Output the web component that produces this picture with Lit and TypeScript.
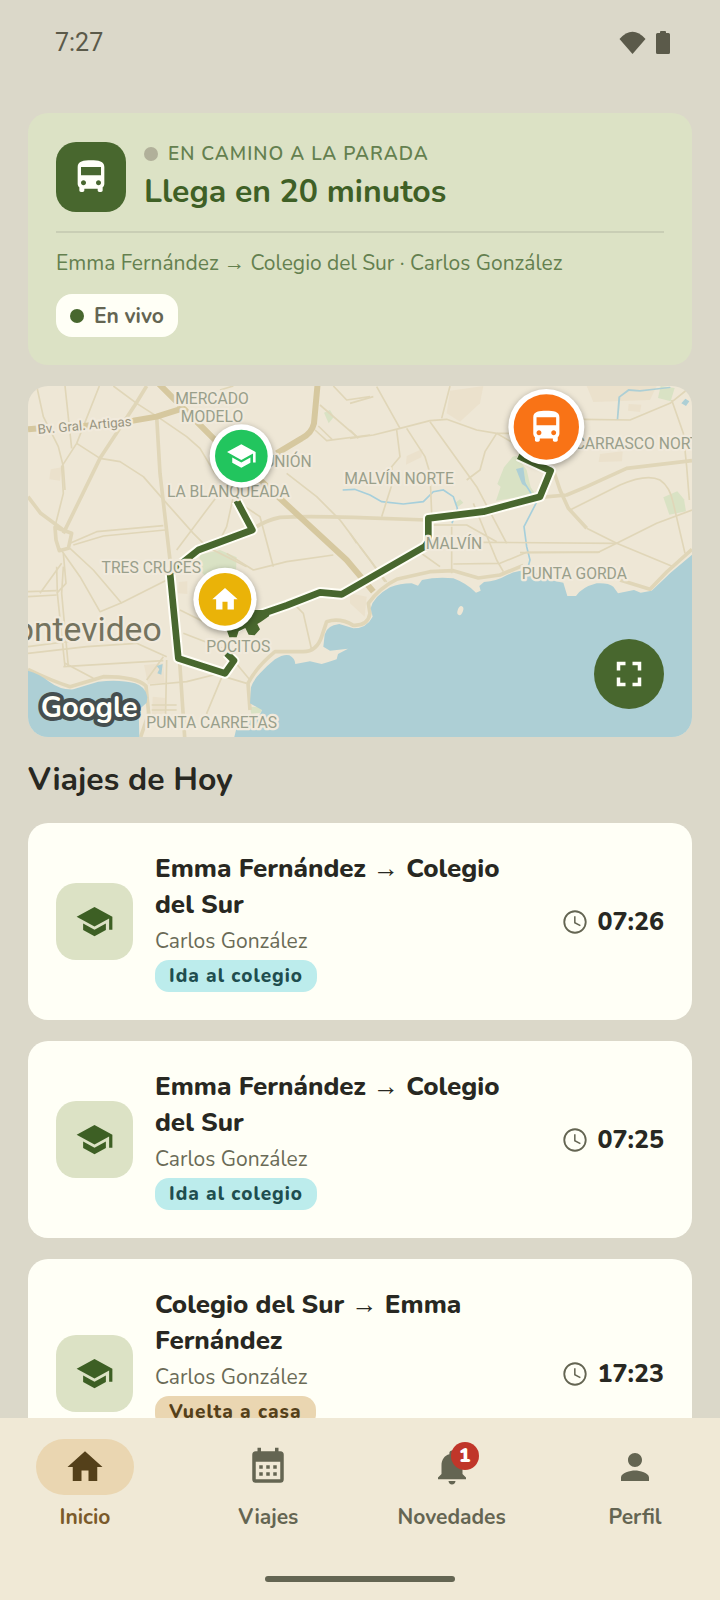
import { css, html, LitElement, svg } from "lit";
import { customElement, property, state } from "lit/decorators.js";
import { classMap } from "lit/directives/class-map.js";

const ICONS = {
  bus: "M4 16c0 .88.39 1.67 1 2.22V20c0 .55.45 1 1 1h1c.55 0 1-.45 1-1v-1h8v1c0 .55.45 1 1 1h1c.55 0 1-.45 1-1v-1.78c.61-.55 1-1.34 1-2.22V6c0-3.5-3.58-4-8-4s-8 .5-8 4v10zm3.5 1c-.83 0-1.5-.67-1.5-1.5S6.67 14 7.5 14s1.5.67 1.5 1.5S8.33 17 7.5 17zm9 0c-.83 0-1.5-.67-1.5-1.5s.67-1.5 1.5-1.5 1.5.67 1.5 1.5-.67 1.5-1.5 1.5zm1.5-6H6V6h12v5z",
  school:
    "M5 13.18v4L12 21l7-3.82v-4L12 17l-7-3.82zM12 3L1 9l11 6 9-4.91V17h2V9L12 3z",
  home: "M10 20v-6h4v6h5v-8h3L12 3 2 12h3v8z",
  calendar:
    "M19 3h-1V1h-2v2H8V1H6v2H5a2 2 0 0 0-2 2v14a2 2 0 0 0 2 2h14a2 2 0 0 0 2-2V5a2 2 0 0 0-2-2zm0 16H5V9h14v10zM7 11h2v2H7zm4 0h2v2h-2zm4 0h2v2h-2zm-8 4h2v2H7zm4 0h2v2h-2zm4 0h2v2h-2z",
  bell: "M12 22c1.1 0 2-.9 2-2h-4c0 1.1.89 2 2 2zm6-6v-5c0-3.07-1.64-5.64-4.5-6.32V4c0-.83-.67-1.5-1.5-1.5s-1.5.67-1.5 1.5v.68C7.63 5.36 6 7.92 6 11v5l-2 2v1h16v-1l-2-2z",
  person:
    "M12 12c2.21 0 4-1.79 4-4s-1.79-4-4-4-4 1.79-4 4 1.79 4 4 4zm0 2c-2.67 0-8 1.34-8 4v2h16v-2c0-2.66-5.33-4-8-4z",
  clock:
    "M11.99 2C6.47 2 2 6.48 2 12s4.47 10 9.99 10C17.52 22 22 17.52 22 12S17.52 2 11.99 2zM12 20.4a8.4 8.4 0 1 1 0-16.8 8.4 8.4 0 0 1 0 16.8zM12.5 7h-1.3v6l5.1 2.6.6-1.1-4.4-2.3z",
  fullscreen:
    "M7 14H5v5h5v-2H7v-3zm-2-4h2V7h3V5H5v5zm12 7h-3v2h5v-5h-2v3zM14 5v2h3v3h2V5h-5z",
};

type IconName = keyof typeof ICONS;

const icon = (name: IconName) => html`
  <svg class="icon" viewBox="0 0 24 24" aria-hidden="true">
    <path d=${ICONS[name]} />
  </svg>
`;

// Nunito's own arrow is too heavy, so arrows get a lighter face
const withArrow = (text: string) => {
  const [from, to] = text.split("→");
  return html`${from}<span class="arrow">→</span>${to}`;
};

const arrowStyles = css`
  .arrow {
    font-family: "Liberation Sans", sans-serif;
    font-weight: 400;
    line-height: 1;
  }
`;

interface Trip {
  title: string;
  driver: string;
  direction: "ida" | "vuelta";
  time: string;
}

const TRIPS: Trip[] = [
  {
    title: "Emma Fernández → Colegio del Sur",
    driver: "Carlos González",
    direction: "ida",
    time: "07:26",
  },
  {
    title: "Emma Fernández → Colegio del Sur",
    driver: "Carlos González",
    direction: "ida",
    time: "07:25",
  },
  {
    title: "Colegio del Sur → Emma Fernández",
    driver: "Carlos González",
    direction: "vuelta",
    time: "17:23",
  },
];

const TABS: { id: string; label: string; icon: IconName; count?: number }[] = [
  { id: "inicio", label: "Inicio", icon: "home" },
  { id: "viajes", label: "Viajes", icon: "calendar" },
  { id: "novedades", label: "Novedades", icon: "bell", count: 1 },
  { id: "perfil", label: "Perfil", icon: "person" },
];

// Map geometry, three units to a pixel
const WATER = [
  "M24 872Q55 880 88 905T160 928Q200 915 235 905Q300 898 345 910Q378 920 382 952L380 968L356 990L358 1071H24Z",
  "M643 1071L650 1042L690 1022L722 1000L726 990L690 970L693 922Q700 900 720 880Q740 858 765 838Q790 822 808 826Q825 835 826 852L870 844L905 852L925 846L950 838L954 822L984 806L930 812L910 800L914 764Q920 736 958 732L1000 745Q1040 745 1058 710L1052 685Q1060 650 1110 622Q1140 610 1175 610L1194 617L1206 600Q1250 590 1300 595Q1340 610 1368 638L1382 632L1378 618L1392 606Q1430 604 1460 586Q1490 570 1530 570L1590 600L1630 608L1642 648L1668 648Q1685 622 1730 610Q1765 608 1780 620L1794 640L1842 630L1862 638L1895 632Q1930 600 1950 580L2016 524V1071Z",
  "M1795 118L1790 118L1795 50L1825 27L1860 30L1950 20L1952 24L1860 35L1827 33L1801 52Z",
  "M1488 267L1510 262L1518 320L1506 312Z",
  "M1984 70L1996 56L2008 64L1998 78Z",
  "M410 858L428 852L424 884L412 880L418 868Z",
];

const PARKS = [
  "M1490 228L1520 270L1532 322L1548 344L1428 362L1442 320L1432 312L1452 262L1478 230Z",
  "M540 524L600 510L650 532L648 572L636 600L560 590L536 570Z",
  "M1930 352L1972 334L1992 358L1998 394L1948 404Z",
  "M1922 18L1964 24L1952 64L1914 54Z",
  "M912 98L930 90L942 110L926 130Z",
  "M1304 370L1320 358L1330 368L1314 380Z",
  "M690 980L728 982L722 998L694 1002Z",
];

const BLOCKS = [
  "M92 268L126 262L120 302L88 298Z",
  "M1290 32L1390 18L1380 70L1320 125L1280 100Z",
  "M1160 228L1208 206L1204 232L1158 254Z",
  "M1740 222L1808 214L1806 244L1736 246Z",
  "M1826 72L1864 74L1860 96L1824 92Z",
  "M1700 18H1910L1890 60L1720 66Z",
  "M476 606L502 604V642L474 640Z",
  "M372 855L430 850L434 908L384 912Z",
  "M990 640L1040 650L1034 710L990 670Z",
  "M398 950L436 954V998L396 1010Z",
];

const MAJOR_ROADS = [
  "M24 148L70 144M170 140L340 122L410 110L486 86",
  "M415 10L590 185L720 300L980 540L1060 635",
  "M893 10L882 130Q875 160 845 175L770 220",
];

const MEDIUM_ROADS = [
  "M380 18L345 75L240 235L130 460",
  "M410 110L420 280L450 540L462 640L478 830L494 1071",
  "M700 445Q740 420 780 412Q850 408 1000 412L1220 420",
  "M1560 352L1640 345L1700 320L1820 265L2016 242",
  "M24 350L62 400L130 450",
  "M1600 270L1620 330L1645 385L1700 445",
  "M105 442L155 460L145 505L118 512L108 480Z",
  "M24 868Q100 905 150 920L250 890Q350 890 378 918L386 1000L362 1071",
  "M690 990L684 910Q710 860 765 815L850 815Q890 815 905 770L920 725Q960 712 1000 736Q1044 738 1050 700L1045 670Q1080 622 1130 598L1230 575L1300 572L1375 594L1440 585L1510 556",
  "M1800 600L1890 628L1940 576L2016 508",
];

const MINOR_ROADS = [
  "M50 18L70 110L115 200L130 260L135 330M135 18L155 205M238 18L170 190L125 260L130 340L105 440",
  "M170 190L240 235L300 245L370 290L440 370L520 460L560 500L680 560",
  "M280 18L350 70L420 115L500 170L540 205L585 280",
  "M150 490L230 455L430 437M160 495L250 468L435 450",
  "M590 350L470 510M640 350L620 440L590 500M660 370L720 410L760 560",
  "M800 280L890 350L960 420L1050 540L1095 605",
  "M900 75L1010 170M885 150L920 182L1050 165M895 138L938 180M940 18L980 60L1050 50M600 30L640 18",
  "M1070 20L1140 145M990 175L1060 165L1140 145L1230 122L1280 118L1370 150L1430 160L1470 160M990 70L1060 50M990 150L1015 175",
  "M1290 18L1265 115M1160 145L1215 230L1230 280L1235 400",
  "M1230 125L1370 320L1460 490M1430 160L1395 215L1380 270L1340 300M1430 160L1490 195",
  "M1130 150L1140 230L1115 260L1120 300L1085 410",
  "M1690 118L1830 120L1950 70L2000 30M1955 60L1990 160L2000 260L2008 360",
  "M1700 445L1790 490L1960 560M1650 390L1800 315Q1880 280 1920 300Q1950 320 1960 370L1995 520",
  "M2016 390L1910 430L1790 490L1390 487M1790 490L1735 517L1520 517L1440 550L1300 552",
  "M1220 435L1340 435L1430 485M1295 440V580M990 460L1010 490M1360 370L1430 540L1450 575M1500 518L1740 516",
  "M24 635L110 632M24 650L110 645M125 550L60 640M120 505L180 590L240 695L305 668L445 598",
  "M150 505L220 570L305 670M110 560L112 640L135 860M130 560L125 640L145 860M130 520L138 610L110 640",
  "M24 820L200 800L350 790L440 830M24 800L180 780M130 860L430 842M135 850L220 895",
  "M480 690L560 730M490 760L620 810M430 830L380 900M390 915L500 905L640 870",
  "M480 850L680 910M610 880L560 1000L580 1050M640 840L690 900M395 975H470M395 990H470M440 840L436 1040",
  "M620 520L700 570L800 545L940 525M810 660L850 700L875 810",
  "M1020 500L1100 606M1190 510L1260 560",
];

const STREAMS =
  "M968 330L1004 328L1050 345L1085 365L1150 372L1210 365L1240 335L1270 330L1300 350L1312 385L1296 430M1508 300L1530 335L1548 370L1512 440L1520 500L1530 540L1520 575";

const ROUTE = [
  "M650 362L697 450L535 510L450 578L475 835L615 880L642 842L620 820",
  "M640 750L690 714L800 676L900 637L965 643L1214 500L1225 485V415L1390 395L1560 350L1592 272L1495 228",
];

// Tangle of short turns around the stop
const ROUTE_HUB =
  "M620 750L700 690L742 690L748 708L722 726L712 732L720 748L704 766L686 764L676 744L656 754L650 772L628 772Z";

// x, baseline, text, anchor
const PLACES: [number, number, string, string][] = [
  [576, 72, "MERCADO", "middle"],
  [576, 126, "MODELO", "middle"],
  [875, 262, "UNIÓN", "end"],
  [625, 350, "LA BLANQUEADA", "middle"],
  [1137, 312, "MALVÍN NORTE", "middle"],
  [1664, 206, "CARRASCO NORTE", "start"],
  [1302, 507, "MALVÍN", "middle"],
  [394, 579, "TRES CRUCES", "middle"],
  [655, 815, "POCITOS", "middle"],
  [575, 1043, "PUNTA CARRETAS", "middle"],
  [1663, 596, "PUNTA GORDA", "middle"],
];

const MARKERS: {
  x: number;
  y: number;
  r: number;
  color: string;
  icon: IconName;
  scale: number;
}[] = [
  { x: 664, y: 228, r: 79, color: "#22c55e", icon: "school", scale: 3.9 },
  { x: 615, y: 658, r: 79, color: "#eab308", icon: "home", scale: 3.8 },
  { x: 1579, y: 141, r: 98, color: "#f97316", icon: "bus", scale: 4.9 },
];

@customElement("route-map")
class RouteMap extends LitElement {
  static styles = css`
    :host {
      display: block;
      position: relative;
      height: 351px;
      border-radius: 20px;
      overflow: hidden;
      background: #eee7d6;
    }
    .map {
      display: block;
      width: 100%;
      height: 100%;
      font-family: Roboto, sans-serif;
    }
    .water {
      fill: #adcfd5;
    }
    .park {
      fill: #d9e2c4;
    }
    .block {
      fill: #ebe1cc;
    }
    .islet {
      fill: #eee7d6;
    }
    .road {
      fill: none;
      stroke: #e0d6b8;
      stroke-linejoin: round;
    }
    .minor {
      stroke-width: 5;
    }
    .medium {
      stroke-width: 11;
    }
    .major {
      stroke: #d6c89f;
      stroke-width: 18;
    }
    .stream {
      fill: none;
      stroke: #a6cfdb;
      stroke-width: 5;
    }
    .casing,
    .route {
      fill: none;
      stroke: #fffef6;
      stroke-width: 32;
      stroke-linejoin: round;
    }
    .route {
      stroke: #48672e;
      stroke-width: 20;
    }
    .hub {
      fill: #48672e;
    }
    .place,
    .street {
      font-size: 47px;
      fill: #999f8b;
      stroke: #f1eadc;
      stroke-width: 14;
      stroke-linejoin: round;
      paint-order: stroke;
    }
    .street {
      font-size: 40px;
      fill: #97947f;
    }
    .city {
      font-size: 101px;
      fill: #74735f;
      stroke: #f1eadc;
      stroke-width: 14;
      stroke-linejoin: round;
      paint-order: stroke;
    }
    .logo {
      font-family: Nunito, sans-serif;
      font-size: 87px;
      font-weight: 700;
      fill: #fffff8;
      stroke: #454f50;
      stroke-width: 24;
      stroke-linejoin: round;
      paint-order: stroke;
    }
    .ring {
      fill: #fff;
      filter: drop-shadow(0 6px 10px rgba(0, 0, 0, 0.35));
    }
    .glyph {
      fill: #fff;
    }
    .expand {
      position: absolute;
      right: 28px;
      bottom: 28px;
      display: grid;
      place-items: center;
      width: 70px;
      height: 70px;
      padding: 0;
      border: 0;
      border-radius: 50%;
      background: #48672e;
      cursor: pointer;
    }
    .icon {
      width: 42px;
      height: 42px;
      fill: #fffff8;
    }
  `;

  render() {
    return html`
      <svg
        class="map"
        viewBox="24 18 1992 1053"
        preserveAspectRatio="xMidYMid slice"
        role="img"
        aria-label="Mapa del recorrido"
      >
        ${BLOCKS.map((d) => svg`<path class="block" d=${d} />`)}
        ${PARKS.map((d) => svg`<path class="park" d=${d} />`)}
        <path class="stream" d=${STREAMS} />
        ${MINOR_ROADS.map((d) => svg`<path class="road minor" d=${d} />`)}
        ${MEDIUM_ROADS.map((d) => svg`<path class="road medium" d=${d} />`)}
        ${MAJOR_ROADS.map((d) => svg`<path class="road major" d=${d} />`)}
        ${WATER.map((d) => svg`<path class="water" d=${d} />`)}
        <ellipse class="islet" cx="1321" cy="692" rx="8" ry="14" transform="rotate(20 1321 692)" />
        ${ROUTE.map((d) => svg`<path class="casing" d=${d} />`)}
        ${ROUTE.map((d) => svg`<path class="route" d=${d} />`)}
        <path class="hub" d=${ROUTE_HUB} />
        ${PLACES.map(
          ([x, y, name, anchor]) =>
            svg`<text class="place" x=${x} y=${y} text-anchor=${anchor}>${name}</text>`,
        )}
        <text class="street" transform="translate(54 162) rotate(-5)">Bv. Gral. Artigas</text>
        <text class="city" x="425" y="782" text-anchor="end">Montevideo</text>
        <text class="logo" x="62" y="1010">Google</text>
        ${MARKERS.map(
          (m) => svg`
            <circle class="ring" cx=${m.x} cy=${m.y} r=${m.r + 16} />
            <circle cx=${m.x} cy=${m.y} r=${m.r} fill=${m.color} />
            <path
              class="glyph"
              transform="translate(${m.x} ${m.y}) scale(${m.scale}) translate(-12 -12)"
              d=${ICONS[m.icon]}
            />
          `,
        )}
      </svg>
      <button class="expand" aria-label="Ampliar mapa">
        ${icon("fullscreen")}
      </button>
    `;
  }
}

@customElement("trip-card")
class TripCard extends LitElement {
  static styles = [
    arrowStyles,
    css`
      :host {
        display: block;
      }
      .card {
        display: flex;
        align-items: center;
        gap: 22px;
        padding: 28px;
        border-radius: 20px;
        background: #fffff6;
      }
      .vuelta {
        min-height: 173px;
      }
      .tile {
        display: grid;
        place-items: center;
        flex: none;
        width: 77px;
        height: 77px;
        border-radius: 20px;
        background: #dce2c5;
      }
      .tile .icon {
        width: 39px;
        height: 39px;
        fill: #3d5f24;
      }
      .info {
        flex: 1;
        align-self: flex-start;
        min-width: 0;
      }
      h3 {
        margin: 0;
        font-size: 26px;
        line-height: 36px;
        font-weight: 800;
        color: #282822;
      }
      .driver {
        margin: 0;
        padding: 3px 0 4px;
        font-size: 21px;
        line-height: 30px;
        color: #6a6b56;
      }
      .tag {
        display: inline-block;
        vertical-align: top;
        padding: 0 14px;
        border-radius: 14px;
        font-size: 19px;
        line-height: 32px;
        font-weight: 800;
        letter-spacing: 1px;
        background: #bcecec;
        color: #1f4e4f;
      }
      .vuelta .tag {
        background: #ead6b1;
        color: #54401a;
      }
      .time {
        display: flex;
        align-items: center;
        gap: 8px;
        margin-left: 22px;
        font-size: 25px;
        line-height: 36px;
        font-weight: 800;
        color: #282822;
      }
      .time .icon {
        width: 28px;
        height: 28px;
        fill: #646552;
      }
    `,
  ];

  @property({ attribute: false }) trip!: Trip;

  render() {
    const { title, driver, direction, time } = this.trip;
    return html`
      <article class=${classMap({ card: true, vuelta: direction === "vuelta" })}>
        <div class="tile">${icon("school")}</div>
        <div class="info">
          <h3>${withArrow(title)}</h3>
          <p class="driver">${driver}</p>
          <span class="tag"
            >${direction === "ida" ? "Ida al colegio" : "Vuelta a casa"}</span
          >
        </div>
        <time class="time">${icon("clock")}<span>${time}</span></time>
      </article>
    `;
  }
}

@customElement("app-root")
class AppRoot extends LitElement {
  static styles = [
    arrowStyles,
    css`
      :host {
        display: flex;
        flex-direction: column;
        height: 100vh;
        overflow: hidden;
        background: #dbd8c9;
        font-family: Nunito, Lato, sans-serif;
        color: #282822;
      }
      .status {
        display: flex;
        flex: none;
        align-items: center;
        justify-content: space-between;
        height: 85px;
        padding: 0 50px 0 55px;
        font-family: Roboto, sans-serif;
        font-size: 25px;
        color: #5b5a4a;
      }
      .signals {
        display: flex;
        gap: 10px;
        fill: #5b5a4a;
      }
      main {
        display: flex;
        flex: 1;
        flex-direction: column;
        gap: 21px;
        min-height: 0;
        padding: 28px 28px 21px;
        overflow-y: auto;
        scrollbar-width: none;
      }
      main > * {
        flex: none;
      }
      .live {
        padding: 28px;
        border-radius: 20px;
        background: #dce2c5;
        color: #64804f;
      }
      .head {
        display: flex;
        align-items: center;
        gap: 18px;
        padding-bottom: 18px;
        border-bottom: 2px solid #c9ceb5;
      }
      .tile {
        display: grid;
        place-items: center;
        flex: none;
        width: 70px;
        height: 70px;
        border-radius: 20px;
        background: #48672e;
      }
      .tile .icon {
        width: 40px;
        height: 40px;
        fill: #fffff8;
      }
      .state {
        display: flex;
        align-items: center;
        gap: 10px;
        margin: 0 0 4px;
        font-size: 19px;
        line-height: 26px;
        font-weight: 600;
        letter-spacing: 1px;
      }
      .dot {
        width: 14px;
        height: 14px;
        border-radius: 50%;
        background: #b1b09a;
      }
      h1 {
        margin: 0;
        font-size: 32px;
        line-height: 42px;
        font-weight: 700;
        color: #3f6026;
      }
      .detail {
        margin: 15px 0 16px;
        font-size: 21px;
        line-height: 30px;
      }
      .chip {
        display: inline-flex;
        align-items: center;
        gap: 10px;
        height: 43px;
        padding: 0 14px;
        border-radius: 16px;
        background: #fffff6;
        font-size: 21px;
        font-weight: 700;
        color: #646552;
        vertical-align: top;
      }
      .chip .dot {
        background: #48672e;
      }
      h2 {
        margin: 0;
        font-size: 32px;
        line-height: 44px;
        font-weight: 700;
      }
      nav {
        display: flex;
        flex: none;
        justify-content: space-between;
        padding: 21px 36px 0;
        background: #f0e9d6;
      }
      .tab {
        display: flex;
        flex-direction: column;
        align-items: center;
        gap: 7px;
        width: 98px;
        font-size: 21px;
        line-height: 30px;
        font-weight: 700;
        white-space: nowrap;
        text-decoration: none;
        color: #646552;
      }
      .pill {
        position: relative;
        display: grid;
        place-items: center;
        width: 98px;
        height: 56px;
        border-radius: 28px;
      }
      .pill .icon {
        width: 42px;
        height: 42px;
        fill: currentColor;
      }
      .active {
        color: #7a5a2a;
      }
      .active .pill {
        background: #ead6b1;
        color: #54401a;
      }
      .count {
        position: absolute;
        top: 3px;
        left: 48px;
        width: 28px;
        border-radius: 14px;
        background: #c0362a;
        color: #fff;
        font-size: 19px;
        line-height: 28px;
        font-weight: 900;
        text-align: center;
      }
      .gesture {
        flex: none;
        padding: 44px 0 18px;
        background: #f0e9d6;
      }
      .bar {
        width: 190px;
        height: 6px;
        margin: 0 auto;
        border-radius: 3px;
        background: #646552;
      }
    `,
  ];

  @state() private tab = "inicio";

  private select(e: Event, id: string) {
    e.preventDefault();
    this.tab = id;
  }

  render() {
    return html`
      <header class="status">
        <span>7:27</span>
        <span class="signals">
          <svg width="27" height="24" viewBox="0 0 27 24" aria-hidden="true">
            <path d="M0.5 8Q13.500-6.500 26.500 8L13.500 23z" />
          </svg>
          <svg width="14" height="24" viewBox="0 0 14 24" aria-hidden="true">
            <path
              d="M5 0h4a1 1 0 0 1 1 1v1h2.500a1.500 1.500 0 0 1 1.500 1.500v18a1.500 1.500 0 0 1-1.500 1.500h-11A1.500 1.500 0 0 1 0 21.500v-18A1.500 1.500 0 0 1 1.500 2H4V1a1 1 0 0 1 1-1z"
            />
          </svg>
        </span>
      </header>
      <main>
        <section class="live">
          <div class="head">
            <div class="tile">${icon("bus")}</div>
            <div>
              <p class="state"><span class="dot"></span>EN CAMINO A LA PARADA</p>
              <h1>Llega en 20 minutos</h1>
            </div>
          </div>
          <p class="detail">
            ${withArrow("Emma Fernández → Colegio del Sur · Carlos González")}
          </p>
          <span class="chip"><span class="dot"></span>En vivo</span>
        </section>
        <route-map></route-map>
        <h2>Viajes de Hoy</h2>
        ${TRIPS.map((trip) => html`<trip-card .trip=${trip}></trip-card>`)}
      </main>
      <nav>
        ${TABS.map(
          (t) => html`
            <a
              class=${classMap({ tab: true, active: this.tab === t.id })}
              href="#${t.id}"
              @click=${(e: Event) => this.select(e, t.id)}
            >
              <span class="pill">
                ${icon(t.icon)}
                ${t.count ? html`<span class="count">${t.count}</span>` : ""}
              </span>
              ${t.label}
            </a>
          `,
        )}
      </nav>
      <div class="gesture"><div class="bar"></div></div>
    `;
  }
}
